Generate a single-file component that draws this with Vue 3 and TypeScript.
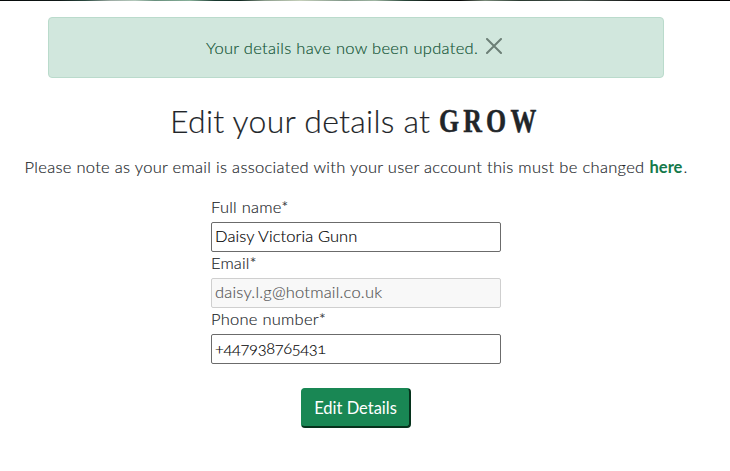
<script setup lang="ts">
import { ref } from 'vue'

const showMessage = ref(true)
const fullName = ref('Daisy Victoria Gunn')
const email = ref('daisy.l.g@hotmail.co.uk')
const phone = ref('+447938765431')
</script>

<template>
  <div class="page">
    <div class="hero"></div>
    <main>
      <div v-if="showMessage" class="alert" role="alert">
        <span class="alert-text">Your details have now been updated.</span>
        <button class="close" type="button" @click="showMessage = false">
          <svg viewBox="0 0 16 16" width="16" height="16">
            <path d="M1 1 15 15M15 1 1 15" fill="none" stroke="currentColor" stroke-width="2" stroke-linecap="round" />
          </svg>
        </button>
      </div>
      <h1><span class="title">Edit your details at</span><span class="brand">GROW</span></h1>
      <p class="note"><span class="note-text">Please note as your email is associated with your user account this must be changed</span><a>here</a>.</p>
      <form @submit.prevent>
        <label for="name" class="l-name">Full name*</label>
        <input id="name" v-model="fullName" class="i-name" type="text" />
        <label for="email" class="l-email">Email*</label>
        <input id="email" v-model="email" class="i-email" type="text" disabled />
        <label for="phone" class="l-phone">Phone number*</label>
        <input id="phone" v-model="phone" class="i-phone" type="text" />
        <button class="submit" type="submit">Edit Details</button>
      </form>
    </main>
  </div>
</template>

<style>
body {
  background: #fff;
  overflow: hidden;
}
</style>

<style scoped>
.page {
  font-family: Lato, sans-serif;
  font-weight: 300;
  font-size: 16.5px;
  line-height: 24px;
  color: #212529;
  -webkit-text-stroke: 0.15px currentColor;
}
.hero {
  height: 1px;
  background: linear-gradient(90deg, #050808 0, #101918 60px, #29483e 85px, #9caaa3 110px, #b3c8bb 135px, #688f7d 155px, #88b09a 190px, #18392f 215px, #102820 240px, #8d9e8d 265px, #c5cfba 300px, #7f9587 345px, #a0b6a3 375px, #284638 405px, #101815 430px, #050606 460px, #7a8b7a 485px, #293930 520px, #46534c 580px, #111 640px, #000 680px);
}
main {
  width: 712px;
  padding-top: 16px;
  display: flex;
  flex-direction: column;
  align-items: center;
}
.alert {
  box-sizing: border-box;
  width: 616px;
  height: 61px;
  padding-right: 4px;
  border: 1px solid #badbcc;
  border-radius: 4px;
  background: #d1e7dd;
  color: #0f5132;
  display: flex;
  justify-content: center;
  align-items: center;
  gap: 8px;
}
.alert-text {
  width: 272px;
  white-space: nowrap;
  letter-spacing: 0.3px;
}
.close {
  width: 16px;
  height: 16px;
  margin-bottom: 4px;
  padding: 0;
  border: 0;
  background: none;
  color: #6c7f76;
}
.close svg {
  display: block;
}
h1 {
  margin: 24px 0 0;
  height: 38px;
  line-height: 38px;
  font-size: 32px;
  font-weight: 300;
  display: flex;
  white-space: nowrap;
}
.title {
  width: 269px;
  letter-spacing: 0.25px;
}
.brand {
  width: 103px;
  font-family: "Liberation Serif", serif;
  font-weight: 700;
  font-size: 34px;
  letter-spacing: 5.5px;
  -webkit-text-stroke: 0.5px currentColor;
  transform: scaleX(0.76);
  transform-origin: left center;
}
.note {
  margin: 15px 0 0;
  display: flex;
  white-space: nowrap;
}
.note-text {
  width: 625px;
  letter-spacing: 0.3px;
}
.note a {
  width: 34px;
  color: #14794a;
  font-weight: 700;
  -webkit-text-stroke: 0;
}
form {
  width: 290px;
  margin-top: 17px;
  display: flex;
  flex-direction: column;
}
label {
  height: 26px;
  line-height: 23px;
}
.l-name,
.l-phone {
  letter-spacing: 0.25px;
}
.l-email {
  letter-spacing: 0.15px;
}
input {
  box-sizing: border-box;
  width: 290px;
  height: 30px;
  padding: 0 3px 3px;
  border: 1px solid #6b6b6b;
  border-radius: 2px;
  background: #fff;
  color: #000;
  font: inherit;
  font-variant-numeric: oldstyle-nums;
}
.i-name {
  letter-spacing: 0.08px;
}
.i-email {
  letter-spacing: 0.2px;
}
.i-phone {
  letter-spacing: -0.38px;
}
input:disabled {
  border-color: #cfcfcf;
  background: #f8f8f8;
  color: #545454;
}
.submit {
  align-self: center;
  width: 110px;
  height: 40px;
  margin-top: 24px;
  padding: 0;
  border: 1px solid #198754;
  border-right: 2px solid #06321c;
  border-bottom: 2px solid #06321c;
  border-radius: 4px;
  background: #198754;
  color: #fff;
  font: inherit;
  font-weight: 400;
  -webkit-text-stroke: 0;
}
</style>
